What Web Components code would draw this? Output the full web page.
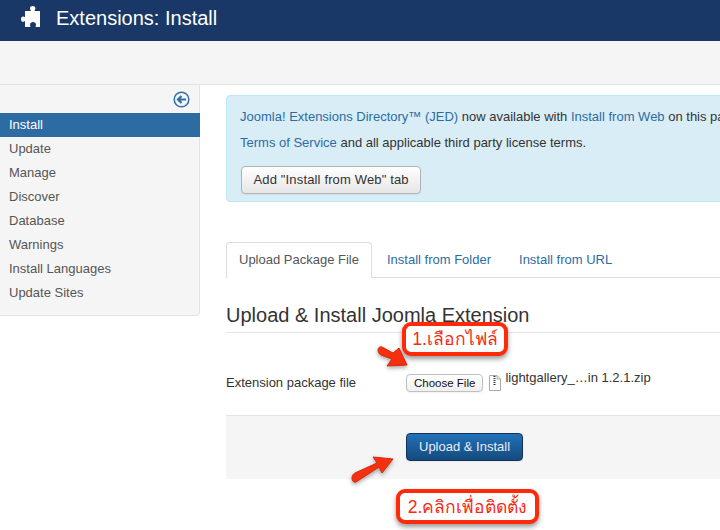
<!DOCTYPE html>
<html>
<head>
<meta charset="utf-8">
<style>
html, body { margin: 0; padding: 0; height: 530px; overflow: hidden; background: #fff; }
body { font: 13px/18px "Liberation Sans", Arial, sans-serif; color: #333; position: relative; }
.main { display: flex; align-items: flex-start; }
</style>
</head>
<body>
<app-header title="Extensions: Install"></app-header>
<app-toolbar></app-toolbar>
<div class="main">
  <side-nav>
    <nav-item active>Install</nav-item>
    <nav-item>Update</nav-item>
    <nav-item>Manage</nav-item>
    <nav-item>Discover</nav-item>
    <nav-item>Database</nav-item>
    <nav-item>Warnings</nav-item>
    <nav-item>Install Languages</nav-item>
    <nav-item>Update Sites</nav-item>
  </side-nav>
  <install-panel></install-panel>
</div>
<call-out style="left:402px;top:322px;width:106px;height:34px">1.เลือกไฟล์</call-out>
<call-out style="left:396px;top:489px;width:143px;height:35px">2.คลิกเพื่อติดตั้ง</call-out>
<red-arrow style="left:374px;top:342px" points="M4 8 C4 6 6 4 8 5 L19 11 L25 6 L33 23 L13 24 L18 17 L7 13 C5 12 4 10 4 8 Z"></red-arrow>
<red-arrow style="left:349px;top:454px" points="M3 24 C3 22 4 20 6 19 L28 9 L24 3 L44 5 L33 19 L30 13 L7 28 C5 29 3 27 3 24 Z" wide></red-arrow>

<script>
class AppHeader extends HTMLElement {
    connectedCallback() {
        const shadow = this.attachShadow({ mode: "open" });
        shadow.innerHTML = `
            <style>
                :host { display: flex; align-items: flex-start; height: 41px; background: #1a3867; color: #fff; padding-left: 20px; box-sizing: border-box; }
                svg { flex: none; width: 21px; height: 21px; margin: 6px 15px 0 0; }
                h1 { margin: 6px 0 0; font: 400 20px/24px "Liberation Sans", Arial, sans-serif; }
            </style>
            <svg viewBox="0 0 21 21"><path fill="#fff" d="M5 5H10.800C10.800 4 10 3.500 10 2.200 10 .9 11.200 0 12.700 0S15.400 .9 15.400 2.200C15.400 3.500 14.600 4 14.600 5H20V21H15.600C15.600 20 16 19.500 16 18.600 16 17 14.600 16 13 16S10 17 10 18.600C10 19.500 10.400 20 10.400 21H5V15.200C4.200 15.200 3.800 15.800 3 15.800 1.800 15.800 1 14.600 1 13.200S1.800 10.600 3 10.600C3.800 10.600 4.200 11.200 5 11.200Z"/></svg>
            <h1>${this.getAttribute("title")}</h1>
        `;
    }
}

class AppToolbar extends HTMLElement {
    connectedCallback() {
        const shadow = this.attachShadow({ mode: "open" });
        shadow.innerHTML = `
            <style>
                :host { display: block; height: 44px; background: #f5f5f5; border-bottom: 1px solid #e3e3e3; box-sizing: border-box; }
            </style>
        `;
    }
}

class SideNav extends HTMLElement {
    connectedCallback() {
        const shadow = this.attachShadow({ mode: "open" });
        shadow.innerHTML = `
            <style>
                :host { display: block; flex: none; width: 200px; height: 231px; box-sizing: border-box; background: #f5f5f5; border: 1px solid #e3e3e3; border-width: 0 1px 1px 0; border-radius: 0 0 4px 0; padding-top: 6px; }
                .toggle { display: flex; justify-content: flex-end; height: 22px; padding-right: 9px; }
                svg { width: 17px; height: 17px; }
            </style>
            <div class="toggle">
                <svg viewBox="0 0 17 17" fill="none" stroke="#2f70a8"><circle cx="8.500" cy="8.500" r="7.300" stroke-width="1.500"/><path d="M13 8.500H5.500M8.500 5 5 8.500 8.500 12" stroke-width="2.200"/></svg>
            </div>
            <slot></slot>
        `;
    }
}

class NavItem extends HTMLElement {
    connectedCallback() {
        const shadow = this.attachShadow({ mode: "open" });
        shadow.innerHTML = `
            <style>
                :host { display: block; height: 24px; line-height: 24px; padding-left: 9px; color: #555; font-size: 13px; }
                :host([active]) { background: #2d6ca2; color: #fff; margin-right: -1px; }
            </style>
            <slot></slot>
        `;
    }
}

class PlainButton extends HTMLElement {
    connectedCallback() {
        const shadow = this.attachShadow({ mode: "open" });
        shadow.innerHTML = `
            <style>
                :host { display: inline-block; box-sizing: border-box; height: 28px; line-height: 26px; padding: 0 11.5px; font-size: 13px; letter-spacing: .15px; color: #333; border: 1px solid #b3b3b3; border-radius: 4px; background: linear-gradient(#fff, #e6e6e6); box-shadow: 0 1px 2px rgba(0,0,0,.05); white-space: nowrap; }
                :host([primary]) { color: #e9eff5; padding: 0 12px; letter-spacing: 0; border-color: #12345b; background: linear-gradient(#2272b8, #154a7d); }
                :host([small]) { height: 18px; line-height: 16px; padding: 0 7px; font-size: 11.5px; letter-spacing: 0; color: #111; border-color: #c0c0c0; background: linear-gradient(#fff, #f0f0f0); }
            </style>
            <slot></slot>
        `;
    }
}

class InstallPanel extends HTMLElement {
    connectedCallback() {
        const shadow = this.attachShadow({ mode: "open" });
        shadow.innerHTML = `
            <style>
                :host { display: block; flex: none; width: 520px; box-sizing: border-box; padding: 10px 0 0 26px; overflow: hidden; }
                a { color: #2d6ca2; }
                .alert { width: 560px; height: 107px; box-sizing: border-box; background: #d9edf7; border: 1px solid #bce8f1; border-radius: 4px; padding: 12px 13px; white-space: nowrap; }
                .alert p { margin: 0 0 8px; line-height: 18px; color: #333; }
                .alert p + p { margin-bottom: 14px; }
                .alert plain-button { margin-left: 1px; }
                .tabs { display: flex; margin-top: 40px; height: 35px; border-bottom: 1px solid #ddd; }
                .tab { height: 35px; line-height: 35px; padding: 0 14px; color: #2d6ca2; box-sizing: border-box; }
                .tab.on { color: #555; border: 1px solid #ddd; border-bottom: 0; border-radius: 4px 4px 0 0; background: #fff; height: 36px; line-height: 34px; padding: 0 12px; margin-right: 1px; }
                h2 { margin: 20px 0 0; font: 400 20px/34px "Liberation Sans", Arial, sans-serif; color: #333; border-bottom: 1px solid #e5e5e5; height: 34px; }
                .row { display: flex; align-items: center; box-sizing: border-box; height: 82px; padding-top: 18px; }
                .row label { width: 180px; color: #333; margin-top: -1px; }
                .file { display: block; flex: none; width: 12px; height: 16px; margin: 0 4px 0 6px; }
                .name { margin-top: -10px; }
                .actions { display: flex; align-items: center; box-sizing: border-box; width: 494px; height: 64px; padding: 0 0 1px 180px; background: #f5f5f5; border-top: 1px solid #e5e5e5; }
            </style>
            <div class="alert">
                <p><a>Joomla! Extensions Directory™ (JED)</a> now available with <a>Install from Web</a> on this page.</p>
                <p><a>Terms of Service</a> and all applicable third party license terms.</p>
                <plain-button>Add "Install from Web" tab</plain-button>
            </div>
            <div class="tabs">
                <div class="tab on">Upload Package File</div>
                <div class="tab">Install from Folder</div>
                <div class="tab">Install from URL</div>
            </div>
            <h2>Upload &amp; Install Joomla Extension</h2>
            <div class="row">
                <label>Extension package file</label>
                <plain-button small>Choose File</plain-button>
                <svg class="file" viewBox="0 0 12 16"><path fill="#fff" stroke="#aaa" d="M.5 .5H8L11.500 4V15.500H.5Z"/><path fill="none" stroke="#aaa" d="M8 .5V4H11.500"/><path fill="none" stroke="#333" stroke-width="2" stroke-dasharray="1 1" d="M5.500 1V11"/></svg>
                <span class="name">lightgallery_…in 1.2.1.zip</span>
            </div>
            <div class="actions"><plain-button primary>Upload &amp; Install</plain-button></div>
        `;
    }
}

class CallOut extends HTMLElement {
    connectedCallback() {
        const shadow = this.attachShadow({ mode: "open" });
        shadow.innerHTML = `
            <style>
                :host { position: absolute; display: flex; align-items: center; justify-content: center; box-sizing: border-box; background: #fff; border: 4px solid #ff2a0a; border-radius: 9px; box-shadow: 0 3px 5px rgba(0,0,0,.4); color: #f62a12; font: 17.5px/24px "Liberation Sans", "Noto Sans", sans-serif; white-space: nowrap; }
            </style>
            <slot></slot>
        `;
    }
}

class RedArrow extends HTMLElement {
    connectedCallback() {
        const shadow = this.attachShadow({ mode: "open" });
        const w = this.hasAttribute("wide") ? 46 : 34;
        shadow.innerHTML = `
            <style>
                :host { position: absolute; display: block; }
                svg { display: block; overflow: visible; filter: drop-shadow(0 2px 2px rgba(0,0,0,.35)); }
            </style>
            <svg width="${w}" height="34"><path fill="#f5300e" stroke="#d8260a" d="${this.getAttribute("points")}"/></svg>
        `;
    }
}

customElements.define("app-header", AppHeader);
customElements.define("app-toolbar", AppToolbar);
customElements.define("side-nav", SideNav);
customElements.define("nav-item", NavItem);
customElements.define("plain-button", PlainButton);
customElements.define("install-panel", InstallPanel);
customElements.define("call-out", CallOut);
customElements.define("red-arrow", RedArrow);
</script>
</body>
</html>
